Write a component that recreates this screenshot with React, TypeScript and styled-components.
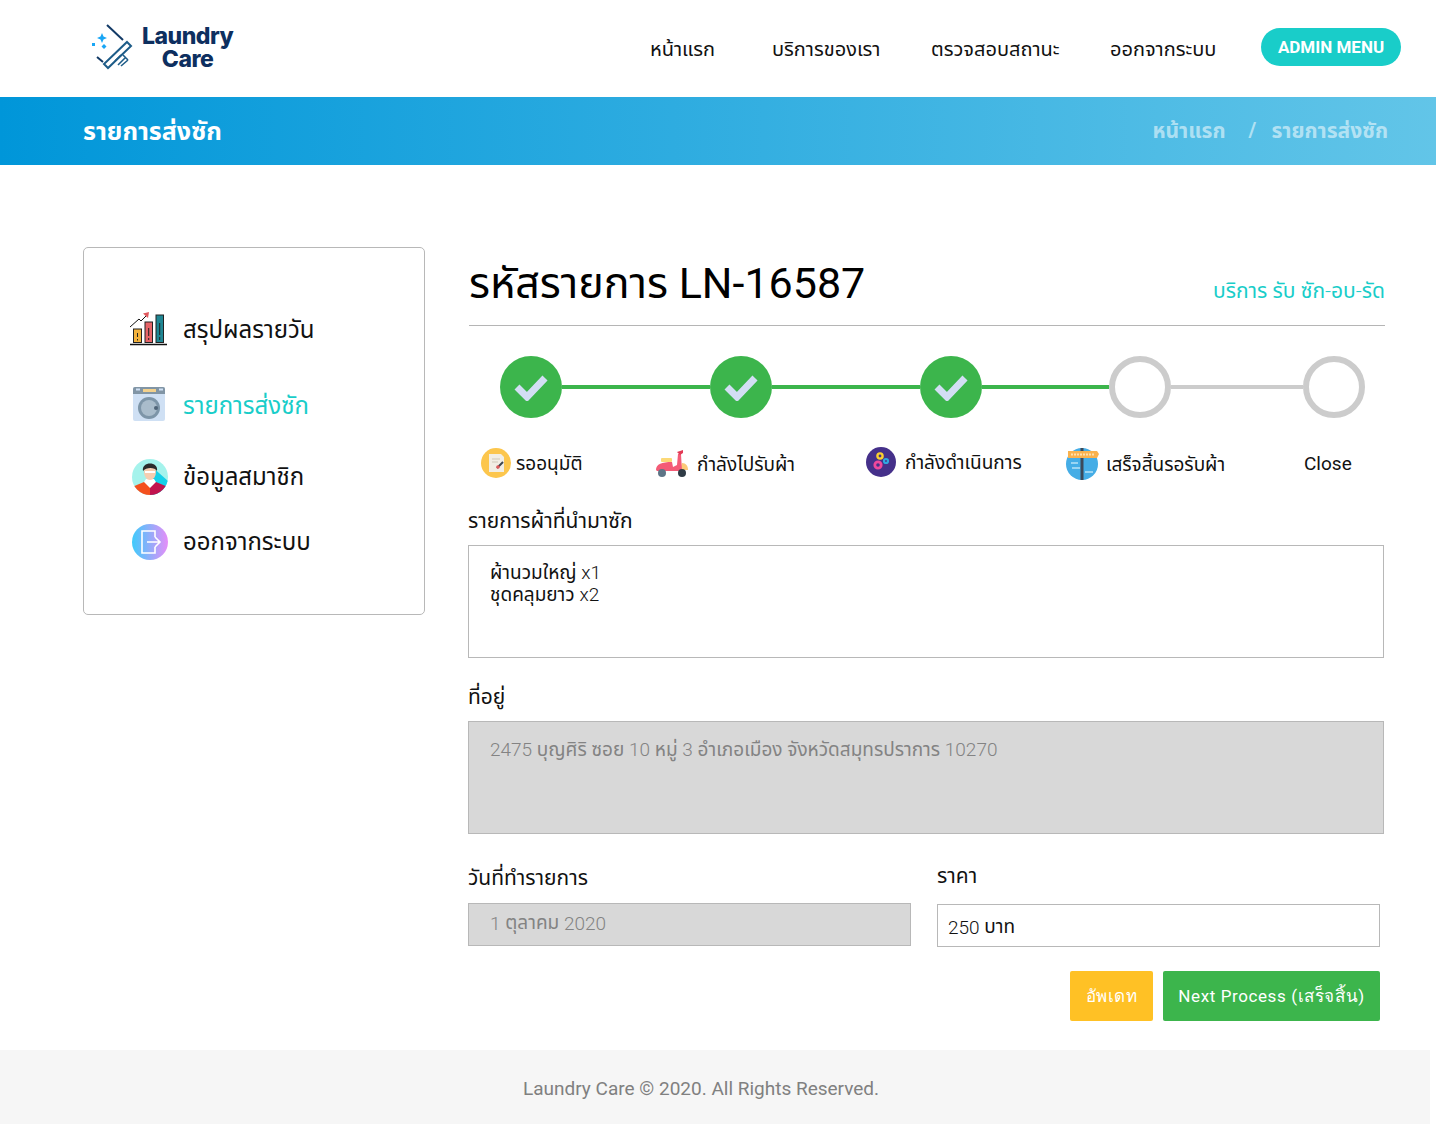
import React from 'react';
import styled, { createGlobalStyle } from 'styled-components';

const GlobalStyle = createGlobalStyle`
  html, body {
    margin: 0;
    padding: 0;
    background: #fff;
    overflow: hidden;
  }
  body {
    font-family: Roboto, "Noto Sans", "Noto Sans Thai", "Liberation Sans", sans-serif;
    color: #000;
  }
  * { box-sizing: border-box; }
`;

const LogoIcon = () => (
  <svg width="44" height="48" viewBox="0 0 44 48" fill="none">
    <path d="M17 1 L33 16" stroke="#123a66" strokeWidth="2" />
    <path d="M7 33 L13 38" stroke="#123a66" strokeWidth="2" />
    <path d="M37 18 L41 22 L18 44 L14 40 Z" stroke="#1d5c88" strokeWidth="2" />
    <path d="M25 37 L31 31 M28 41 L36 33 M31 42 L38 36 M33 31 L38 36" stroke="#1d5c88" strokeWidth="1.6" />
    <path d="M12 9 L13.500 12.500 L17 14 L13.500 15.500 L12 19 L10.500 15.500 L7 14 L10.500 12.500 Z" fill="#19a6f5" />
    <rect x="2" y="19" width="3" height="3" fill="#19a6f5" />
    <path d="M14 20 L16.500 22.500 L14 25 L11.500 22.500 Z" fill="#19a6f5" />
  </svg>
);

const ChartIcon = () => (
  <svg width="38" height="34" viewBox="0 0 38 34">
    <path d="M0 32.500 H37" stroke="#111" strokeWidth="1.3" />
    <path d="M0 15 L9 7 L11 9 L17 3" stroke="#111" strokeWidth="1" fill="none" />
    <path d="M19 0 L13 1.500 L18 6 Z" fill="#e0585d" />
    <rect x="3.500" y="17" width="8" height="13.500" fill="#f3b23c" stroke="#222" />
    <rect x="15" y="10" width="7.500" height="20.500" fill="#e66468" stroke="#222" />
    <rect x="26" y="3" width="7.500" height="27.500" fill="#1f8693" stroke="#222" />
    <path d="M7.500 21 V25 M7.500 27 V28.500 M18.700 16 V24 M18.700 26 V28 M29.700 11 V23 M29.700 25 V28" stroke="#222" strokeWidth="1" />
  </svg>
);

const WasherIcon = () => (
  <svg width="32" height="34" viewBox="0 0 32 34">
    <rect x="0" y="0" width="32" height="34" rx="2" fill="#cfe0f4" />
    <path d="M0 2 a2 2 0 0 1 2 -2 H30 a2 2 0 0 1 2 2 V7 H0 Z" fill="#8195a5" />
    <rect x="10" y="2" width="13" height="3" fill="#f2d08c" />
    <path d="M3 2.500 H7 M26 2.500 H30" stroke="#cfe0f4" strokeWidth="2" />
    <circle cx="16" cy="21" r="11" fill="#7d95a8" />
    <circle cx="16" cy="21" r="8" fill="#a9bccb" />
    <circle cx="23" cy="21" r="2" fill="#4e6478" />
  </svg>
);

const MemberIcon = () => (
  <svg width="36" height="36" viewBox="0 0 36 36">
    <defs>
      <clipPath id="member">
        <circle cx="18" cy="18" r="18" />
      </clipPath>
    </defs>
    <g clipPath="url(#member)">
      <rect width="36" height="36" fill="#a5f3ec" />
      <path d="M18 6 L36 22 V0 H18 Z M18 0 H36 V36 H18 Z" fill="#16d0e8" />
      <path d="M0 36 V28 L12 23 H18 V36 Z" fill="#f4511e" />
      <path d="M36 36 V28 L24 23 H18 V36 Z" fill="#c2134e" />
      <path d="M12 23 L18 29 L24 23 L22 20 H14 Z" fill="#fff" />
      <ellipse cx="18" cy="13" rx="6" ry="8" fill="#f6cdb0" />
      <path d="M11 12 C9 2 27 2 25 12 C23 8 14 8 11 12 Z" fill="#2b2b2b" />
      <path d="M13 13 H23" stroke="#fff" strokeWidth="2" />
    </g>
  </svg>
);

const LogoutIcon = () => (
  <svg width="36" height="36" viewBox="0 0 36 36">
    <defs>
      <linearGradient id="logout" x1="0" y1="0" x2="1" y2="0">
        <stop offset="0" stopColor="#3ecbfb" />
        <stop offset="1" stopColor="#e68ef8" />
      </linearGradient>
    </defs>
    <circle cx="18" cy="18" r="18" fill="url(#logout)" />
    <path d="M23 13 V7 H10 V29 H23 V23" stroke="#fff" strokeWidth="1.6" fill="none" />
    <path d="M15 18 H28 M23 13 L28 18 L23 23" stroke="#fff" strokeWidth="1.6" fill="none" />
  </svg>
);

const ApproveIcon = () => (
  <svg width="30" height="30" viewBox="0 0 30 30">
    <circle cx="15" cy="15" r="15" fill="#fcc64d" />
    <path d="M8 6 H20 L23 9 V24 H8 Z" fill="#f2eee4" />
    <path d="M11 11 H19 M11 14 H17" stroke="#cfc8b8" strokeWidth="1" />
    <path d="M16 20 L22 14" stroke="#3e4650" strokeWidth="2" />
    <circle cx="17" cy="19" r="1.800" fill="#e35b5b" />
  </svg>
);

const ScooterIcon = () => (
  <svg width="32" height="28" viewBox="0 0 32 28">
    <path d="M26 13 C30 13 32 16 32 20 H24 Z" fill="#fcc977" />
    <rect x="5" y="8" width="11" height="4" rx="1" fill="#fcd977" />
    <path d="M0 20 C0 14 6 12 16 12 L17 17 L21 15 L22 4 H25 L26 21 H1 Z" fill="#f45b76" />
    <path d="M21 2 L27 0 V3 L24 5 Z" fill="#e23a55" />
    <circle cx="6" cy="23" r="4" fill="#5e7486" />
    <circle cx="26" cy="23" r="4" fill="#2f3b46" />
  </svg>
);

const GearsIcon = () => (
  <svg width="30" height="30" viewBox="0 0 30 30">
    <circle cx="15" cy="15" r="15" fill="#45308a" />
    <circle cx="14" cy="9" r="2.600" fill="none" stroke="#fcd02f" strokeWidth="2.400" />
    <circle cx="20" cy="14" r="2" fill="none" stroke="#2fa9e0" strokeWidth="2.200" />
    <circle cx="12" cy="18" r="3.200" fill="none" stroke="#f0489c" strokeWidth="2.800" />
  </svg>
);

const SuccessIcon = () => (
  <svg width="34" height="32" viewBox="0 0 34 32">
    <circle cx="16" cy="16" r="16" fill="#45ade6" />
    <path d="M6 20 H14 M19 24 H27 M5 15 H12" stroke="#9ad5f3" strokeWidth="2" />
    <rect x="14.500" y="0" width="3" height="32" fill="#3c4a5a" />
    <path d="M2 3 H31 L33 6 L31 10 H2 Z" fill="#f9b24e" />
    <path d="M5 6.500 H28" stroke="#fde0ad" strokeWidth="2" strokeDasharray="2 1" />
  </svg>
);

const navItems = [
  { label: 'หน้าแรก', width: 122 },
  { label: 'บริการของเรา', width: 159 },
  { label: 'ตรวจสอบสถานะ', width: 179 },
  { label: 'ออกจากระบบ', width: 151 },
];

const sideItems = [
  { label: 'สรุปผลรายวัน', icon: <ChartIcon />, height: 76, indent: 0, lift: 2 },
  { label: 'รายการส่งซัก', icon: <WasherIcon />, active: true, height: 76, indent: 3, lift: 3 },
  { label: 'ข้อมูลสมาชิก', icon: <MemberIcon />, height: 66, indent: 2, lift: 1 },
  { label: 'ออกจากระบบ', icon: <LogoutIcon />, height: 64, indent: 2, lift: 1 },
];

const connectors = [
  { width: 148, done: true },
  { width: 148, done: true },
  { width: 127, done: true },
  { width: 132, done: false },
];

const steps = [
  { label: 'รออนุมัติ', icon: <ApproveIcon />, width: 175, gap: 5, shift: 0 },
  { label: 'กำลังไปรับผ้า', icon: <ScooterIcon />, width: 210, gap: 9, shift: 2 },
  { label: 'กำลังดำเนินการ', icon: <GearsIcon />, width: 200, gap: 9, shift: -2 },
  { label: 'เสร็จสิ้นรอรับผ้า', icon: <SuccessIcon />, width: 238, gap: 6, shift: 2 },
  { label: 'Close', width: 60, gap: 0, shift: -1 },
];

const Step = ({ done }: { done: boolean }) =>
  done ? (
    <DoneCircle>
      <svg width="34" height="28" viewBox="0 0 34 28">
        <path d="M3 14 L13 24 L31 5" stroke="#d2def3" strokeWidth="7" fill="none" />
      </svg>
    </DoneCircle>
  ) : (
    <TodoCircle />
  );

export default function App() {
  return (
    <Page>
      <GlobalStyle />
      <Header>
        <Brand>
          <LogoIcon />
          <BrandText>
            <BrandLine>Laundry</BrandLine>
            <BrandLine>Care</BrandLine>
          </BrandText>
        </Brand>
        <Nav>
          {navItems.map((item) => (
            <NavLink key={item.label} $width={item.width}>
              {item.label}
            </NavLink>
          ))}
          <AdminButton>ADMIN MENU</AdminButton>
        </Nav>
      </Header>
      <Banner>
        <BannerTitle>รายการส่งซัก</BannerTitle>
        <Crumbs>
          <span>หน้าแรก</span>
          <CrumbSlash>/</CrumbSlash>
          <span>รายการส่งซัก</span>
        </Crumbs>
      </Banner>
      <Main>
        <Sidebar>
          {sideItems.map((item) => (
            <SideRow key={item.label} $height={item.height} $active={item.active}>
              <SideIcon $indent={item.indent} $lift={item.lift}>
                {item.icon}
              </SideIcon>
              {item.label}
            </SideRow>
          ))}
        </Sidebar>
        <Content>
          <TitleRow>
            <Title>รหัสรายการ LN-16587</Title>
            <ServiceName>
              บริการ รับ ซัก<Light>-</Light>อบ<Light>-</Light>รัด
            </ServiceName>
          </TitleRow>
          <Stepper>
            <Step done />
            <Connector $width={connectors[0].width} $done={connectors[0].done} />
            <Step done />
            <Connector $width={connectors[1].width} $done={connectors[1].done} />
            <Step done />
            <Connector $width={connectors[2].width} $done={connectors[2].done} />
            <Step done={false} />
            <Connector $width={connectors[3].width} $done={connectors[3].done} />
            <Step done={false} />
          </Stepper>
          <StepLabels>
            {steps.map((step) => (
              <StepLabel key={step.label} $width={step.width} $gap={step.gap} $shift={step.shift}>
                {step.icon}
                <StepText>{step.label}</StepText>
              </StepLabel>
            ))}
          </StepLabels>
          <FieldLabel $top={21}>รายการผ้าที่นำมาซัก</FieldLabel>
          <TextBox>
            ผ้านวมใหญ่ <Light>x1</Light>
            <br />
            ชุดคลุมยาว <Light>x2</Light>
          </TextBox>
          <FieldLabel $top={19}>ที่อยู่</FieldLabel>
          <TextBox $disabled>
            <Light>2475</Light> บุญศิริ ซอย <Light>10</Light> หมู่ <Light>3</Light> อำเภอเมือง
            จังหวัดสมุทรปราการ <Light>10270</Light>
          </TextBox>
          <TwoCols>
            <Col>
              <FieldLabel>วันที่ทำรายการ</FieldLabel>
              <SmallBox $disabled $top={1}>
                <Light>1</Light>&nbsp;ตุลาคม&nbsp;<Light>2020</Light>
              </SmallBox>
            </Col>
            <Col>
              <FieldLabel $top={-2}>ราคา</FieldLabel>
              <SmallBox $top={4}>
                <Light>250</Light>&nbsp;บาท
              </SmallBox>
            </Col>
          </TwoCols>
          <Buttons>
            <ActionButton $bg="#ffc125" $width={83}>
              อัพเดท
            </ActionButton>
            <ActionButton $bg="#3cb54c" $width={217}>
              Next Process (เสร็จสิ้น)
            </ActionButton>
          </Buttons>
        </Content>
      </Main>
      <Footer>Laundry Care © 2020. All Rights Reserved.</Footer>
    </Page>
  );
}

const Page = styled.div`
  width: 1436px;
  height: 1124px;
  overflow: hidden;
`;

const Header = styled.header`
  height: 97px;
  display: flex;
  align-items: center;
  justify-content: space-between;
  padding: 0 35px 0 90px;
`;

const Brand = styled.div`
  display: flex;
  align-items: center;
  gap: 8px;
  padding-bottom: 2px;
`;

const BrandText = styled.div`
  font-family: Inter, Roboto, sans-serif;
  font-weight: 800;
  font-size: 23px;
  letter-spacing: -0.5px;
  color: #0d2f5f;
  text-align: center;
`;

const BrandLine = styled.div`
  height: 23px;
  line-height: 23px;
`;

const Nav = styled.nav`
  display: flex;
  align-items: center;
`;

const NavLink = styled.a<{ $width: number }>`
  width: ${(p) => p.$width}px;
  font-size: 20px;
  color: #111;
  padding-top: 2px;
`;

const AdminButton = styled.button`
  width: 140px;
  height: 38px;
  margin-top: -4px;
  border: 0;
  border-radius: 19px;
  background: #19cdc9;
  color: #fff;
  font: 700 17px Roboto, sans-serif;
`;

const Banner = styled.div`
  height: 68px;
  display: flex;
  align-items: center;
  justify-content: space-between;
  padding: 0 48px 0 83px;
  background: linear-gradient(90deg, #0096d9, #62c5e8);
`;

const BannerTitle = styled.h1`
  margin: 0;
  padding-top: 2px;
  font-size: 25px;
  font-weight: 700;
  color: #fff;
`;

const Crumbs = styled.div`
  display: flex;
  font-size: 21px;
  font-weight: 700;
  color: rgba(255, 255, 255, 0.55);
`;

const CrumbSlash = styled.span`
  margin: 0 15px 0 23px;
  padding-top: 2px;
`;

const Main = styled.main`
  height: 885px;
  display: flex;
  padding: 82px 51px 0 83px;
`;

const Sidebar = styled.aside`
  width: 342px;
  height: 368px;
  padding: 45px 46px 0;
  border: 1px solid #b8b8b8;
  border-radius: 5px;
`;

const SideRow = styled.div<{ $height: number; $active?: boolean }>`
  height: ${(p) => p.$height}px;
  display: flex;
  align-items: center;
  font-size: 24px;
  color: ${(p) => (p.$active ? '#19cdc9' : '#111')};
`;

const SideIcon = styled.span<{ $indent: number; $lift: number }>`
  width: 53px;
  display: flex;
  padding-left: ${(p) => p.$indent}px;
  margin-bottom: ${(p) => p.$lift * 2}px;
  svg {
    display: block;
  }
`;

const Content = styled.div`
  width: 917px;
  margin-left: 43px;
`;

const TitleRow = styled.div`
  height: 79px;
  margin-left: 1px;
  display: flex;
  align-items: flex-end;
  justify-content: space-between;
  padding-bottom: 12px;
  border-bottom: 1px solid #b5b5b5;
`;

const Title = styled.h2`
  margin: 0;
  font-size: 43px;
  font-weight: 400;
  line-height: 60px;
  color: #000;
`;

const ServiceName = styled.span`
  margin-bottom: 6px;
  font-size: 21px;
  color: #19cdc9;
`;

const Light = styled.span`
  font-weight: 300;
`;

const Stepper = styled.div`
  display: flex;
  align-items: center;
  height: 62px;
  margin: 30px 0 0 32px;
`;

const DoneCircle = styled.div`
  width: 62px;
  height: 62px;
  flex: none;
  display: flex;
  align-items: center;
  justify-content: center;
  border-radius: 50%;
  background: #3cb54c;
`;

const TodoCircle = styled.div`
  width: 62px;
  height: 62px;
  flex: none;
  border: 6px solid #cccccc;
  border-radius: 50%;
`;

const Connector = styled.div<{ $width: number; $done: boolean }>`
  width: ${(p) => p.$width}px;
  height: 4px;
  flex: none;
  background: ${(p) => (p.$done ? '#3cb54c' : '#cccccc')};
`;

const StepLabels = styled.div`
  display: flex;
  align-items: center;
  height: 34px;
  margin: 28px 0 0 13px;
`;

const StepLabel = styled.div<{ $width: number; $gap: number; $shift: number }>`
  width: ${(p) => p.$width}px;
  flex: none;
  display: flex;
  align-items: center;
  gap: ${(p) => p.$gap}px;
  margin-top: ${(p) => p.$shift}px;
  font-size: 19px;
  color: #111;
  white-space: nowrap;
`;

const StepText = styled.span`
  padding-top: 2px;
`;

const FieldLabel = styled.div<{ $top?: number }>`
  height: 40px;
  margin-top: ${(p) => p.$top ?? 0}px;
  margin-bottom: 4px;
  display: flex;
  align-items: center;
  font-size: 21px;
  color: #111;
`;

const TextBox = styled.div<{ $disabled?: boolean }>`
  width: 916px;
  height: 113px;
  padding: ${(p) => (p.$disabled ? 17 : 16)}px 21px 0;
  border: 1px solid #b8b8b8;
  font-size: 19px;
  line-height: 22px;
  background: ${(p) => (p.$disabled ? '#d8d8d8' : '#fff')};
  color: ${(p) => (p.$disabled ? '#838383' : '#111')};
`;

const TwoCols = styled.div`
  display: grid;
  grid-template-columns: 443px 443px;
  column-gap: 26px;
  margin-top: 24px;
`;

const Col = styled.div`
  display: flex;
  flex-direction: column;
`;

const SmallBox = styled.div<{ $disabled?: boolean; $top: number }>`
  height: 43px;
  margin-top: ${(p) => p.$top}px;
  display: flex;
  align-items: center;
  padding: ${(p) => (p.$disabled ? '0 21px 2px' : '4px 10px 0')};
  border: 1px solid #b8b8b8;
  font-size: 19px;
  background: ${(p) => (p.$disabled ? '#d8d8d8' : '#fff')};
  color: ${(p) => (p.$disabled ? '#838383' : '#111')};
`;

const Buttons = styled.div`
  display: flex;
  justify-content: flex-end;
  gap: 10px;
  margin: 24px 5px 0 0;
`;

const ActionButton = styled.button<{ $bg: string; $width: number }>`
  width: ${(p) => p.$width}px;
  height: 50px;
  padding: 0 0 2px;
  border: 0;
  border-radius: 2px;
  background: ${(p) => p.$bg};
  color: #fff;
  font: 400 17px Roboto, sans-serif;
  letter-spacing: 0.6px;
`;

const Footer = styled.footer`
  width: 1430px;
  height: 74px;
  display: flex;
  align-items: center;
  padding: 2px 0 0 523px;
  background: #f6f6f6;
  font-size: 19px;
  color: #808080;
`;
